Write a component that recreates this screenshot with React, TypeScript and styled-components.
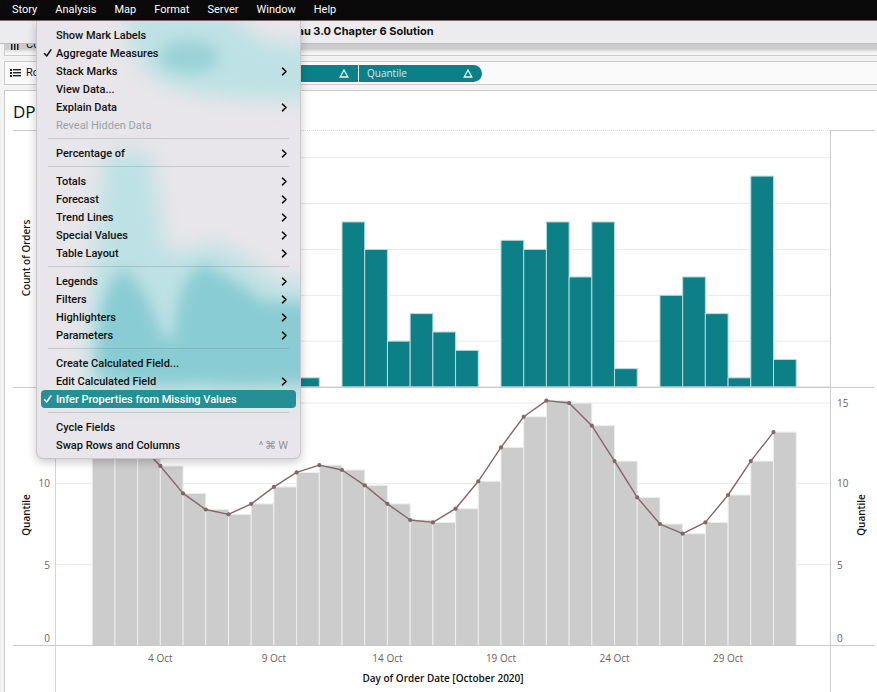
import React from "react";
import styled, { createGlobalStyle, css } from "styled-components";

const TEAL = "#0c8086";
const RULE = "#cccccc";
const UI_FONT = 'Roboto, "Liberation Sans", sans-serif';
const TITLE_FONT = 'Inter, "Liberation Sans", sans-serif';
const CHART_FONT = '"Open Sans", "Noto Sans", sans-serif';

const GlobalStyle = createGlobalStyle`
  * { box-sizing: border-box; }
  body {
    margin: 0;
    background: #f4f3f4;
    font-family: ${UI_FONT};
    font-size: 11px;
    color: #111;
    overflow: hidden;
  }
  button {
    font: inherit;
    color: inherit;
    border: 0;
    padding: 0;
    margin: 0;
    background: none;
    text-align: left;
  }
`;

const Page = styled.div`
  position: relative;
  display: flex;
  flex-direction: column;
  height: 100vh;
  overflow: hidden;
`;

const MenuBar = styled.nav`
  display: flex;
  flex: none;
  gap: 18px;
  height: 21px;
  padding: 0 12px;
  align-items: center;
  background: #0a0a0a;
  border-bottom: 1px solid #80686a;
  color: #fff;
`;

const MenuBarItem = styled.button`
  line-height: 20px;
`;

const TitleBar = styled.header`
  flex: none;
  height: 23px;
  padding-left: 268px;
  background: #ececee;
  border-bottom: 1px solid #bdbdbd;
  font-family: ${TITLE_FONT};
  line-height: 21px;
  font-weight: 700;
  white-space: nowrap;
`;

const Shelves = styled.div`
  display: flex;
  flex: none;
  flex-direction: column;
  gap: 5px;
  padding-left: 4px;
  margin-bottom: 5px;
`;

const Shelf = styled.div<{ $clipped?: boolean }>`
  display: flex;
  align-items: ${(p) => (p.$clipped ? "flex-end" : "center")};
  height: ${(p) => (p.$clipped ? 12 : 24)}px;
  overflow: hidden;
  border: 1px solid ${RULE};
  border-right: 0;
  background: #fafafa;
  ${(p) =>
    p.$clipped &&
    css`
      border-top: 0;
      background: linear-gradient(#cccccc 0 5px, #e8e8e8 7px, #f8f8f8 10px);
    `}
`;

const ShelfLabel = styled.div<{ $clipped?: boolean }>`
  display: flex;
  flex: none;
  align-items: center;
  gap: 5px;
  width: 210px;
  padding-left: 5px;
  padding-bottom: ${(p) => (p.$clipped ? 3 : 0)}px;
  line-height: 14px;
`;

const Pill = styled.button<{ $last?: boolean }>`
  display: flex;
  flex: none;
  align-items: center;
  justify-content: space-between;
  width: ${(p) => (p.$last ? 123 : 143)}px;
  height: 17px;
  padding: 0 9px 0 8px;
  margin-right: 1px;
  border-radius: ${(p) => (p.$last ? "0 9px 9px 0" : "9px 0 0 9px")};
  background: ${TEAL};
  color: #d4eeee;
  font-family: ${CHART_FONT};
  font-size: 10px;
`;

const Card = styled.main`
  flex: 1;
  min-height: 0;
  margin-left: 4px;
  padding: 0 3px 0 8px;
  border: 1px solid ${RULE};
  border-right: 0;
  border-bottom: 0;
  background: #fff;
  font-family: ${CHART_FONT};
  overflow: hidden;
`;

const SheetTitle = styled.h1`
  margin: 0;
  height: 39px;
  font-size: 17px;
  font-weight: 400;
  line-height: 41px;
`;

const Viz = styled.div`
  display: grid;
  grid-template-columns: 43px 1fr 44px;
  grid-template-rows: 258px 258px 60px;
`;

const Pane = styled.div<{ $left?: boolean; $right?: boolean; $top?: boolean }>`
  min-width: 0;
  overflow: hidden;
  border-bottom: 1px solid ${RULE};
  ${(p) => p.$left && css`border-right: 1px solid #d4d4d4;`}
  ${(p) => p.$right && css`border-left: 1px solid ${RULE};`}
  ${(p) => p.$top && css`border-top: 1px solid ${RULE};`}
`;

const PlotPane = styled(Pane)<{ $first?: boolean }>`
  ${(p) => p.$first && css`border-top: 1px dotted #dddddd;`}
`;

const Plot = styled.svg`
  display: block;
  width: 100%;
  height: 100%;
`;

const Tick = styled.text`
  font-family: ${CHART_FONT};
  font-size: 10px;
  fill: #735e60;
`;

const AxisTitle = styled.text<{ $bold?: boolean }>`
  font-family: ${(p) => (p.$bold ? CHART_FONT : '"Noto Sans", sans-serif')};
  font-size: 10px;
  font-weight: ${(p) => (p.$bold ? 600 : 500)};
  text-anchor: middle;
  fill: #111;
`;

const Menu = styled.div`
  position: absolute;
  top: 21px;
  left: 36px;
  width: 265px;
  padding: 5px 4px 4px;
  border: solid #c9c7ca;
  border-width: 0 1px 1px;
  border-radius: 0 0 7px 7px;
  background: #e8e6ea;
  box-shadow: 0 3px 10px rgba(0, 0, 0, 0.22);
  overflow: hidden;
`;

const Backdrop = styled.svg`
  position: absolute;
  top: 0;
  left: 0;
  width: 100%;
  height: 100%;
`;

const MenuList = styled.div`
  position: relative;
  display: flex;
  flex-direction: column;
`;

const MenuRow = styled.button<{ $active?: boolean }>`
  display: flex;
  align-items: center;
  height: 18px;
  padding: 0 8px 0 2px;
  border-radius: 4px;
  font-weight: 500;
  white-space: nowrap;
  ${(p) =>
    p.$active &&
    css`
      background: #258f95;
      color: #fff;
    `}
  &:disabled {
    color: #97a3a8;
    font-weight: 400;
  }
`;

const CheckSlot = styled.span`
  display: flex;
  width: 13px;
`;

const RowText = styled.span`
  flex: 1;
`;

const Shortcut = styled.span`
  display: flex;
  gap: 2px;
  color: #939197;
  font-weight: 400;
`;

const Separator = styled.div`
  height: 1px;
  margin: 4px 7px 5px;
  background: rgba(110, 120, 125, 0.26);
`;

const Check = () => (
  <svg width="10" height="10" viewBox="0 0 10 10" fill="none" stroke="currentColor" strokeWidth="1.5" strokeLinecap="round" strokeLinejoin="round">
    <path d="M1.5 5.5 3.7 8 8 1.8" />
  </svg>
);

const Chevron = () => (
  <svg width="7" height="9" viewBox="0 0 7 9" fill="none" stroke="currentColor" strokeWidth="1.6" strokeLinecap="round" strokeLinejoin="round">
    <path d="M1.5 1.2 5 4.5 1.5 7.8" />
  </svg>
);

const Delta = () => (
  <svg width="10" height="9" viewBox="0 0 10 9" fill="none" stroke="#e8f6f6" strokeWidth="1.3">
    <path d="M5 1 8.8 8H1.2Z" />
  </svg>
);

const RowsIcon = () => (
  <svg width="11" height="9" viewBox="0 0 11 9" fill="#222">
    {[0, 3, 6].map((y) => (
      <g key={y}>
        <rect x="0" y={y} width="2" height="2" />
        <rect x="3" y={y} width="8" height="1.4" />
      </g>
    ))}
  </svg>
);

const ColumnsIcon = () => (
  <svg width="11" height="9" viewBox="0 0 11 9" fill="#222">
    {[1, 4, 7].map((x) => (
      <g key={x}>
        <rect x={x} y="0" width="2" height="2" />
        <rect x={x} y="3" width="1.5" height="6" />
      </g>
    ))}
  </svg>
);

type Entry = { label: string; check?: boolean; sub?: boolean; off?: boolean; active?: boolean; keys?: string };

const groups: Entry[][] = [
  [
    { label: "Show Mark Labels" },
    { label: "Aggregate Measures", check: true },
    { label: "Stack Marks", sub: true },
    { label: "View Data..." },
    { label: "Explain Data", sub: true },
    { label: "Reveal Hidden Data", off: true },
  ],
  [{ label: "Percentage of", sub: true }],
  ["Totals", "Forecast", "Trend Lines", "Special Values", "Table Layout"].map((label) => ({ label, sub: true })),
  ["Legends", "Filters", "Highlighters", "Parameters"].map((label) => ({ label, sub: true })),
  [
    { label: "Create Calculated Field..." },
    { label: "Edit Calculated Field", sub: true },
    { label: "Infer Properties from Missing Values", check: true, active: true },
  ],
  [{ label: "Cycle Fields" }, { label: "Swap Rows and Columns", keys: "^⌘W" }],
];

const AnalysisMenu = () => (
  <Menu role="menu" aria-label="Analysis">
    <Backdrop aria-hidden="true" viewBox="0 0 263 437" preserveAspectRatio="none">
      <defs>
        <filter id="wide" x="-40%" y="-40%" width="180%" height="180%" colorInterpolationFilters="sRGB">
          <feGaussianBlur stdDeviation="10" />
        </filter>
        <filter id="near" x="-60%" y="-60%" width="220%" height="220%" colorInterpolationFilters="sRGB">
          <feGaussianBlur stdDeviation="7" />
        </filter>
      </defs>
      <g fill="#bde1e4" filter="url(#wide)">
        <path d="M92 -10H190L225 20L300 28V76Q200 84 135 66Q84 44 92 -10Z" />
        <path d="M68 132H114Q122 190 128 228Q150 236 172 220Q215 236 235 258L300 264V378H50Q48 290 68 132Z" />
      </g>
      <ellipse cx="152" cy="36" rx="30" ry="16" fill="#8fcdd3" opacity="0.75" filter="url(#near)" />
      <g fill="#8accd3" filter="url(#near)">
        <path d="M60 352Q58 268 87 248Q110 268 124 312L136 322Q142 248 168 244Q198 258 225 280L300 284V360Q200 368 165 362Q90 368 60 352Z" />
      </g>
    </Backdrop>
    <MenuList>
      {groups.map((group, g) => (
        <React.Fragment key={g}>
          {g > 0 && <Separator role="separator" />}
          {group.map((e) => (
            <MenuRow
              key={e.label}
              role={e.check ? "menuitemcheckbox" : "menuitem"}
              aria-checked={e.check}
              aria-haspopup={e.sub ? "menu" : undefined}
              disabled={e.off}
              $active={e.active}
            >
              <CheckSlot>{e.check && <Check />}</CheckSlot>
              <RowText>{e.label}</RowText>
              {e.sub && <Chevron />}
              {e.keys && (
                <Shortcut>
                  {[...e.keys].map((key) => (
                    <span key={key}>{key}</span>
                  ))}
                </Shortcut>
              )}
            </MenuRow>
          ))}
        </React.Fragment>
      ))}
    </MenuList>
  </Menu>
);

// Orders per day, 1 to 31 October.
const orders = [0, 0, 2, 4, 3, 0, 5, 2, 6, 1, 0, 18, 15, 5, 8, 6, 4, 0, 16, 15, 18, 12, 18, 2, 0, 10, 12, 8, 1, 23, 3];
const quantiles = [
  13.2, 13.1, 12.6, 11.1, 9.4, 8.4, 8.1, 8.75, 9.8, 10.7, 11.15, 10.85, 9.9, 8.75, 7.75, 7.6, 8.45, 10.15, 12.25,
  14.15, 15.15, 15, 13.6, 11.4, 9.15, 7.5, 6.9, 7.6, 9.3, 11.4, 13.2,
];

const FIRST = 4.68;
const STEP = 2.934;
const ORDER_UNIT = 9.17;
const ORDER_BASE = 256;
const QUANTILE_UNIT = 16.13;
const QUANTILE_BASE = 257;

const dayX = (day: number) => `${FIRST + (day - 1) * STEP}%`;
const quantileY = (v: number) => QUANTILE_BASE - v * QUANTILE_UNIT;

const OrdersPlot = () => (
  <Plot role="img" aria-label="Count of orders per day">
    {[5, 10, 15, 20, 25].map((v) => (
      <line key={v} x1="0" x2="100%" y1={ORDER_BASE - v * ORDER_UNIT} y2={ORDER_BASE - v * ORDER_UNIT} stroke="#e9e9e9" />
    ))}
    {orders.map((v, i) =>
      v ? (
        <rect
          key={i}
          x={dayX(i + 1)}
          y={ORDER_BASE - v * ORDER_UNIT}
          width={`${STEP}%`}
          height={v * ORDER_UNIT}
          fill={TEAL}
          stroke="#b5dcde"
          strokeWidth="1"
        />
      ) : null
    )}
    <line x1="0" x2="100%" y1="256" y2="256" stroke={RULE} />
  </Plot>
);

const QuantilePlot = () => (
  <Plot role="img" aria-label="Quantile per day">
    {[5, 10, 15].map((v) => (
      <line key={v} x1="0" x2="100%" y1={quantileY(v)} y2={quantileY(v)} stroke="#e9e9e9" />
    ))}
    {quantiles.map((v, i) => (
      <rect
        key={i}
        x={dayX(i + 1)}
        y={quantileY(v)}
        width={`${STEP}%`}
        height={v * QUANTILE_UNIT + 2}
        fill="#cccccc"
        stroke="#eeeeee"
        strokeWidth="1"
      />
    ))}
    {quantiles.slice(1).map((v, i) => (
      <line
        key={i}
        x1={dayX(i + 1)}
        y1={quantileY(quantiles[i])}
        x2={dayX(i + 2)}
        y2={quantileY(v)}
        stroke="#80686a"
        strokeWidth="1.4"
      />
    ))}
    {quantiles.map((v, i) => (
      <circle key={i} cx={dayX(i + 1)} cy={quantileY(v)} r="2.1" fill="#80686a" />
    ))}
  </Plot>
);

const QuantileAxis = ({ right }: { right?: boolean }) => (
  <Plot>
    {[
      [0, 254],
      [5, 181],
      [10, 99],
      [15, 19],
    ].map(([v, y]) => (
      <Tick key={v} x={right ? 6 : 37} y={y} textAnchor={right ? "start" : "end"}>
        {v}
      </Tick>
    ))}
    <AxisTitle $bold transform={`translate(${right ? 34 : 17} 127) rotate(-90)`}>
      Quantile
    </AxisTitle>
  </Plot>
);

export default function App() {
  return (
    <>
      <GlobalStyle />
      <Page>
        <MenuBar aria-label="Application">
          {["Story", "Analysis", "Map", "Format", "Server", "Window", "Help"].map((name) => (
            <MenuBarItem key={name}>{name}</MenuBarItem>
          ))}
        </MenuBar>
        <TitleBar>Tableau 3.0 Chapter 6 Solution</TitleBar>
        <Shelves>
          <Shelf $clipped>
            <ShelfLabel $clipped>
              <ColumnsIcon />
              Columns
            </ShelfLabel>
          </Shelf>
          <Shelf>
            <ShelfLabel>
              <RowsIcon />
              Rows
            </ShelfLabel>
            <Pill>
              <span>Count of Orders</span>
              <Delta />
            </Pill>
            <Pill $last>
              <span>Quantile</span>
              <Delta />
            </Pill>
          </Shelf>
        </Shelves>
        <Card>
          <SheetTitle>DPS</SheetTitle>
          <Viz>
            <Pane $left $top>
              <Plot>
                <AxisTitle transform="translate(17 127) rotate(-90)">Count of Orders</AxisTitle>
              </Plot>
            </Pane>
            <PlotPane $first>
              <OrdersPlot />
            </PlotPane>
            <Pane $right $top />

            <Pane $left>
              <QuantileAxis />
            </Pane>
            <PlotPane>
              <QuantilePlot />
            </PlotPane>
            <Pane $right>
              <QuantileAxis right />
            </Pane>

            <Pane $left />
            <PlotPane>
              <Plot>
                {[4, 9, 14, 19, 24, 29].map((day) => (
                  <Tick key={day} x={dayX(day)} y="16" textAnchor="middle">
                    {day} Oct
                  </Tick>
                ))}
                <AxisTitle $bold x="50%" y="36">
                  Day of Order Date [October 2020]
                </AxisTitle>
              </Plot>
            </PlotPane>
            <Pane $right />
          </Viz>
        </Card>
        <AnalysisMenu />
      </Page>
    </>
  );
}
